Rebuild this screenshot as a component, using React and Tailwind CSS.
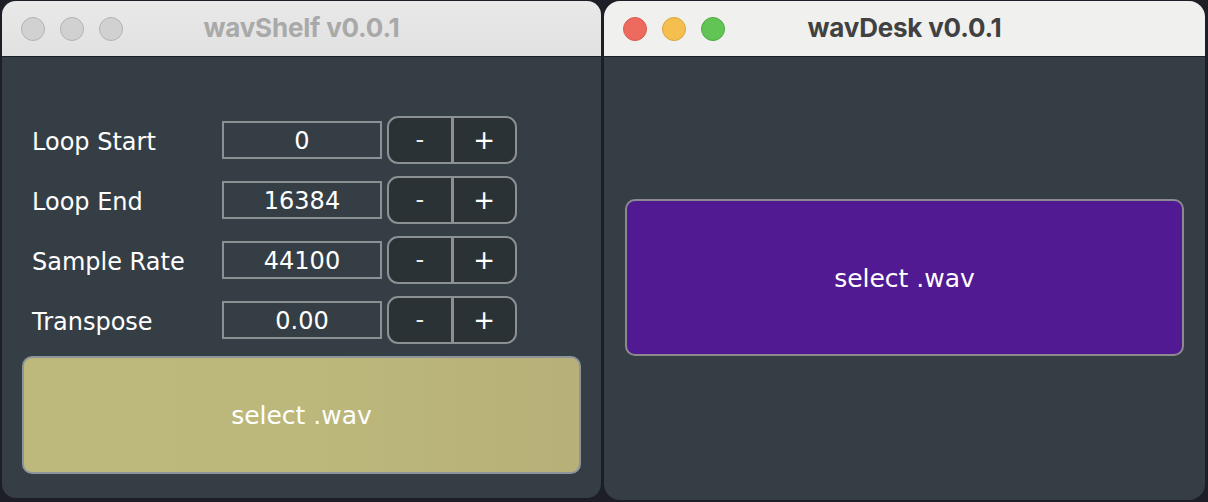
import React from 'react';

const ui = { fontFamily: '"DejaVu Sans", Verdana, sans-serif' };
const title = { fontFamily: 'Inter, "Liberation Sans", sans-serif' };

const rows = [
    { label: 'Loop Start', value: '0' },
    { label: 'Loop End', value: '16384' },
    { label: 'Sample Rate', value: '44100' },
    { label: 'Transpose', value: '0.00' },
];

const TrafficLights = ({ active }) => (
    <div className="flex items-center gap-[15px] pl-[19px]">
        {active ? (
            <>
                <span className="w-[24px] h-[24px] rounded-full bg-[#ee6a5e] border border-[#d85a4f]" />
                <span className="w-[24px] h-[24px] rounded-full bg-[#f5bf4f] border border-[#d9a53c]" />
                <span className="w-[24px] h-[24px] rounded-full bg-[#61c454] border border-[#4fa944]" />
            </>
        ) : (
            <>
                <span className="w-[24px] h-[24px] rounded-full bg-[#d1d1d1] border border-[#b3b3b3]" />
                <span className="w-[24px] h-[24px] rounded-full bg-[#d1d1d1] border border-[#b3b3b3]" />
                <span className="w-[24px] h-[24px] rounded-full bg-[#d1d1d1] border border-[#b3b3b3]" />
            </>
        )}
    </div>
);

const TitleBar = ({ text, active }) => (
    <div
        className={`relative h-[56px] flex items-center border-b border-[#1c2024] ${active ? 'bg-[#f0f0ee]' : 'bg-gradient-to-b from-[#e9e9e9] to-[#e1e1e1]'}`}
    >
        <TrafficLights active={active} />
        <span
            style={title}
            className={`absolute inset-0 flex items-center justify-center pb-[3px] text-[26px] font-bold tracking-[-0.2px] ${active ? 'text-[#414141]' : 'text-[#a9a9a9]'}`}
        >
            {text}
        </span>
    </div>
);

const Stepper = () => (
    <div className="flex h-[48px] w-[130px] rounded-[11px] border-2 border-[#8b9093] bg-[#2b3236] text-white overflow-hidden">
        <button className="flex-1 flex items-center justify-center text-[24px] leading-none text-[#e8e8e8]">-</button>
        <div className="w-[3px] bg-[#8b9093]" />
        <button className="flex-1 flex items-center justify-center text-[26px] leading-none">+</button>
    </div>
);

const App = () => {
    return (
        <div className="w-[1208px] h-[502px] bg-[#1e1f26] flex items-start gap-[3px] pl-[2px] pt-[1px] overflow-hidden" style={ui}>

            {/* wavShelf window */}
            <div className="w-[599px] h-[497px] rounded-[14px] overflow-hidden bg-[#353e45] flex flex-col">
                <TitleBar text="wavShelf v0.0.1" />
                <div className="flex-1 flex flex-col px-[20px] pt-[59px] gap-[12px]">
                    {rows.map((r) => (
                        <div key={r.label} className="flex items-center h-[48px]">
                            <span className="w-[200px] pl-[10px] pt-[3px] text-[24px] text-white">{r.label}</span>
                            <div className="w-[160px] h-[38px] border-2 border-[#8b9093] flex items-center justify-center pt-[1px] text-[24px] text-white mr-[5px]">
                                {r.value}
                            </div>
                            <Stepper />
                        </div>
                    ))}
                    <button className="h-[118px] w-[559px] rounded-[10px] border-2 border-[#8d949b] bg-gradient-to-r from-[#bdb97c] via-[#bcb87b] to-[#b7b078] text-white text-[25px] pt-[2px]">
                        select .wav
                    </button>
                </div>
            </div>

            {/* wavDesk window */}
            <div className="w-[601px] h-[499px] rounded-[16px] overflow-hidden bg-[#353e45] flex flex-col">
                <TitleBar text="wavDesk v0.0.1" active />
                <div className="flex-1 px-[21px] pt-[142px]">
                    <button className="h-[157px] w-[559px] rounded-[10px] border-2 border-[#8a8a8f] bg-[#511a92] text-white text-[25px] pt-[3px]">
                        select .wav
                    </button>
                </div>
            </div>
        </div>
    );
};

export default App;
